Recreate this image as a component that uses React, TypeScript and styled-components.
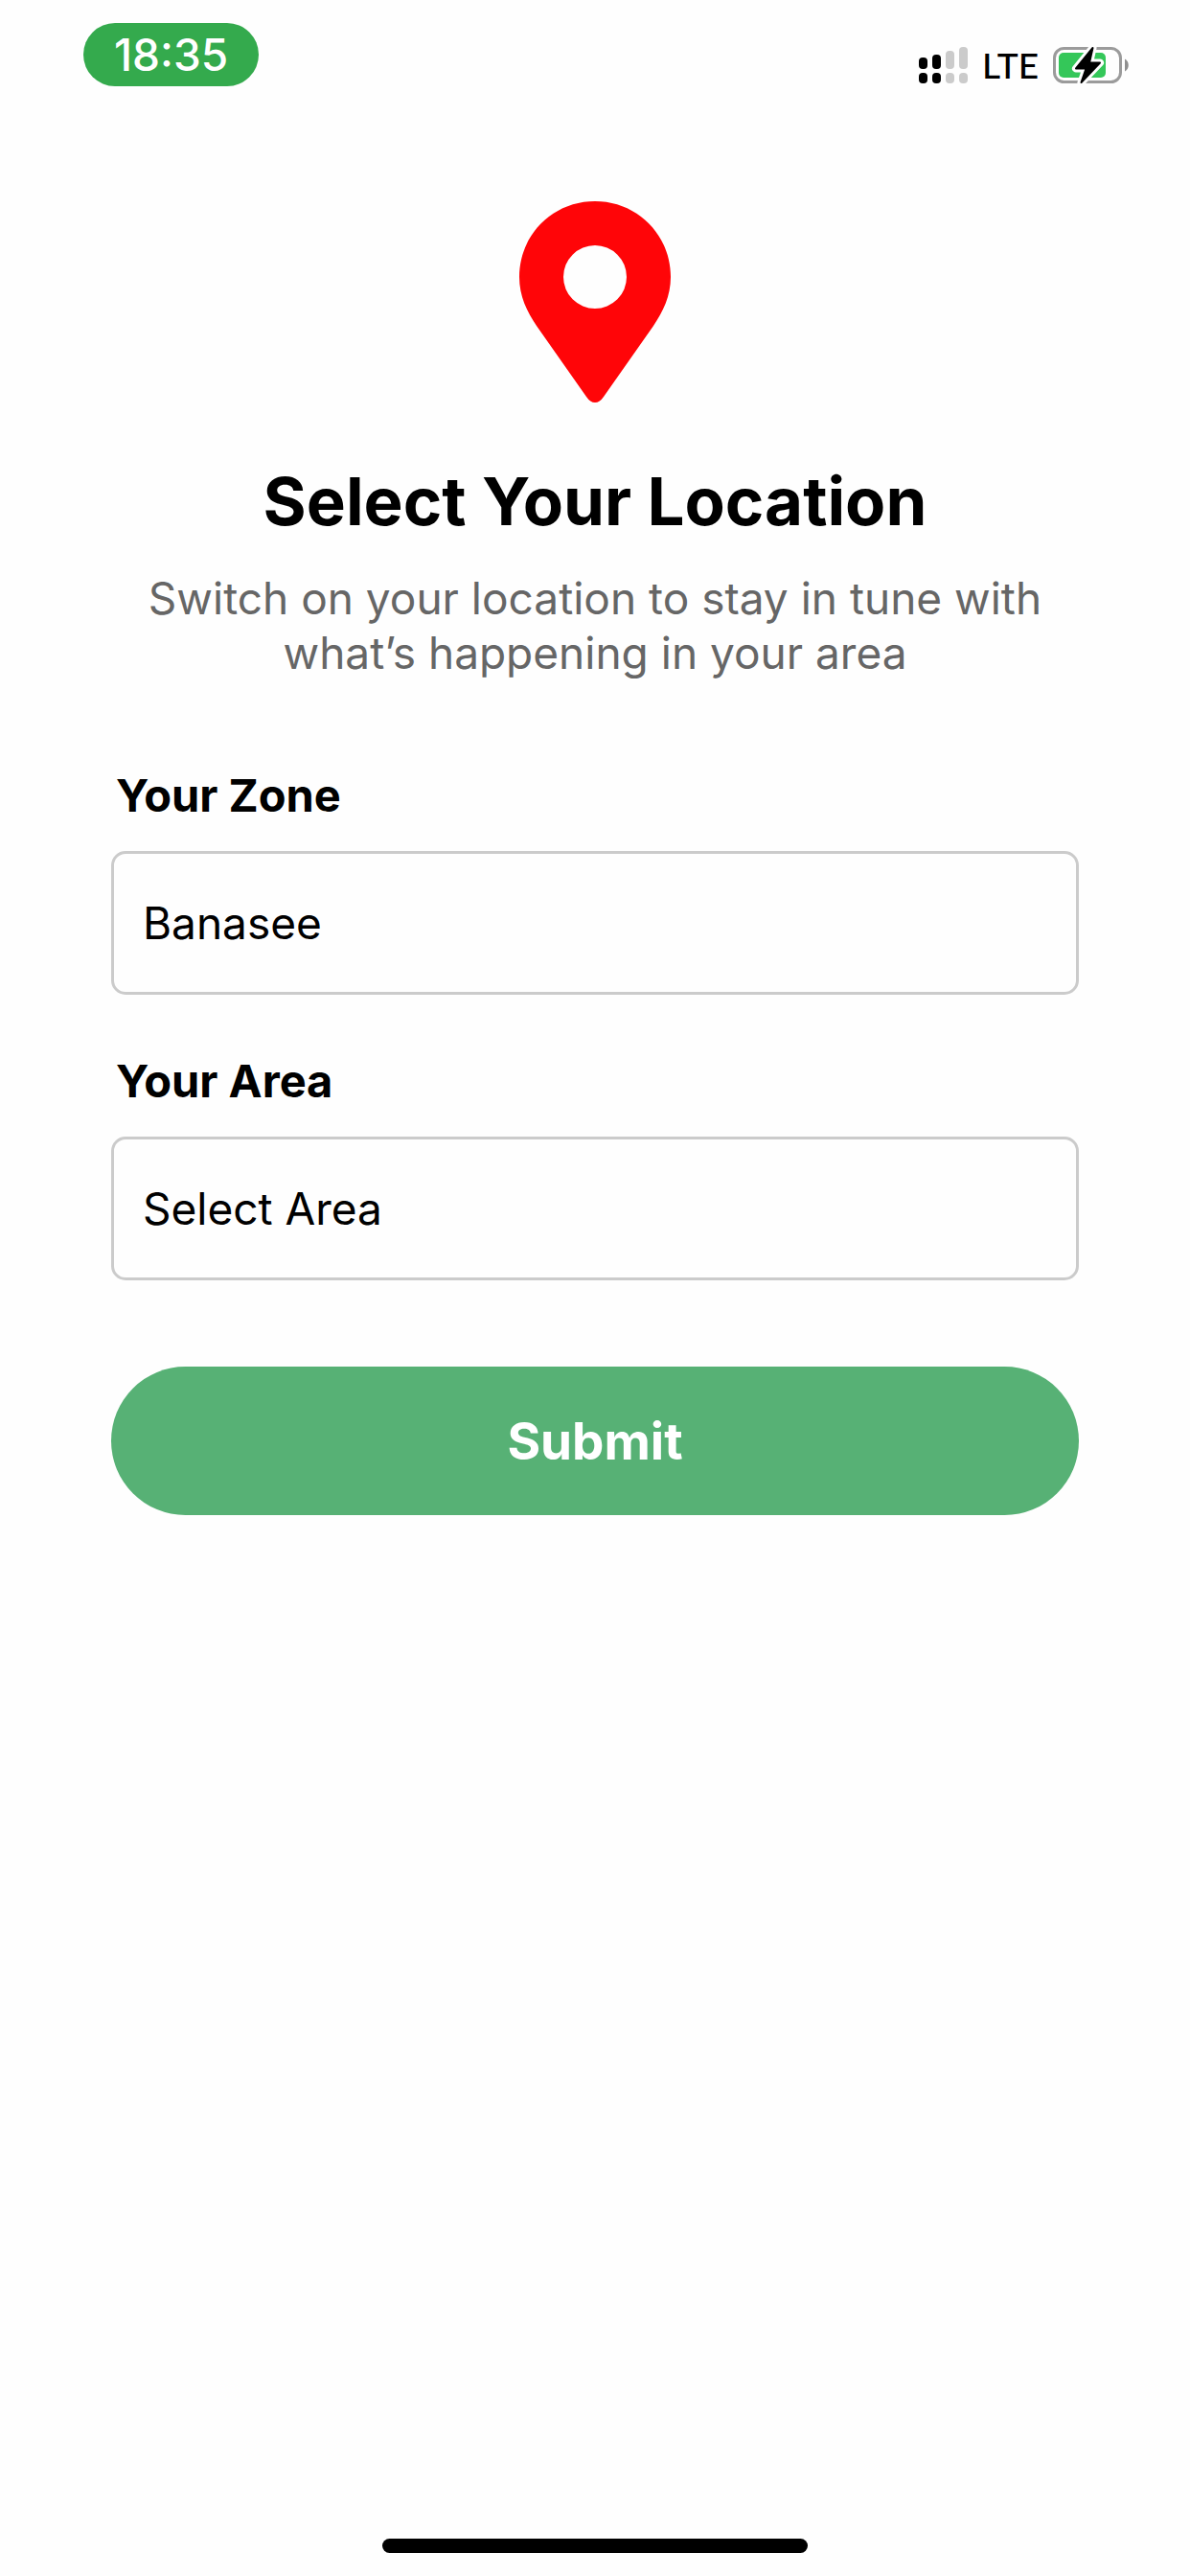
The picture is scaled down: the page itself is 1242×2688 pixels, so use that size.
import React, { useState } from "react";
import styled, { createGlobalStyle } from "styled-components";

const GlobalStyle = createGlobalStyle`
  *, *::before, *::after { box-sizing: border-box; }
  body {
    margin: 0;
    background: #fefefe;
    color: #000;
    font-family: Inter, "Liberation Sans", sans-serif;
  }
`;

const Screen = styled.div`
  display: flex;
  flex-direction: column;
  min-height: 100vh;
`;

const StatusBar = styled.header`
  display: flex;
  align-items: flex-start;
  justify-content: space-between;
  padding: 24px 64px 0 87px;
`;

const TimePill = styled.time`
  padding: 0 32px;
  border-radius: 33px;
  background: #34aa4d;
  color: #fff;
  font-size: 46px;
  font-weight: 500;
  line-height: 66px;
`;

const StatusIcons = styled.div`
  display: flex;
  align-items: center;
  gap: 15px;
  padding-top: 24px;
`;

const Carrier = styled.span`
  font-family: Lato, Inter, sans-serif;
  font-size: 37px;
  font-weight: 500;
  line-height: 40px;
`;

const Main = styled.main`
  display: flex;
  flex-direction: column;
  align-items: center;
  padding: 120px 116px 0;
`;

const Title = styled.h1`
  margin: 61px 0 31px;
  font-size: 69px;
  font-weight: 700;
  line-height: 84px;
  text-align: center;
`;

const Subtitle = styled.p`
  margin: 0;
  color: #666;
  font-size: 46px;
  line-height: 57px;
  text-align: center;
`;

const Form = styled.form`
  display: flex;
  flex-direction: column;
  gap: 61px;
  width: 100%;
  margin-top: 91px;
`;

const Field = styled.div`
  display: flex;
  flex-direction: column;
  gap: 30px;
`;

const Label = styled.label`
  padding-left: 5px;
  font-size: 47px;
  font-weight: 700;
  line-height: 57px;
`;

const Select = styled.select`
  appearance: none;
  width: 100%;
  height: 150px;
  padding: 0 30px;
  border: 3px solid #cbcbcb;
  border-radius: 15px;
  background: transparent;
  color: #000;
  font-family: inherit;
  font-size: 46px;
`;

const SubmitButton = styled.button`
  height: 155px;
  margin-top: 29px;
  border: 0;
  border-radius: 78px;
  background: #57b175;
  color: #fff;
  font-family: inherit;
  font-size: 53px;
  font-weight: 700;
`;

const HomeIndicator = styled.div`
  width: 444px;
  max-width: 60%;
  height: 15px;
  margin: auto auto 24px;
  border-radius: 8px;
  background: #000;
`;

const SignalIcon = () => (
  <svg width="51" height="38" viewBox="0 0 51 38" aria-hidden="true">
    <g fill="#000">
      <rect x="0" y="11" width="9" height="12" rx="4" />
      <rect x="14" y="8" width="9" height="15" rx="4" />
      <rect x="0" y="27" width="9" height="11" rx="4" />
      <rect x="14" y="27" width="9" height="11" rx="4" />
    </g>
    <g fill="#cbcbcb">
      <rect x="28" y="4" width="9" height="19" rx="4" />
      <rect x="42" y="0" width="9" height="23" rx="4" />
      <rect x="28" y="27" width="9" height="11" rx="4" />
      <rect x="42" y="27" width="9" height="11" rx="4" />
    </g>
  </svg>
);

const BOLT = "M41.5 2 L24 23.5 H34.5 L29.5 38 L49 17.500 H38 Z";

const BatteryIcon = () => (
  <svg width="79" height="40" viewBox="0 0 79 40" aria-hidden="true">
    <rect x="1.5" y="2.5" width="69" height="35" rx="10" fill="none" stroke="#9b9b9b" strokeWidth="3" />
    <rect x="6" y="7" width="49" height="26" rx="5" fill="#34c759" />
    <path d="M75 13.500 C80 16 80 24 75 26.500 Z" fill="#8f8f8f" />
    <path d={BOLT} fill="#fefefe" stroke="#fefefe" strokeWidth="8" strokeLinejoin="round" />
    <path d={BOLT} fill="#000" stroke="#000" strokeWidth="2" strokeLinejoin="round" />
  </svg>
);

const PinIcon = () => (
  <svg width="158" height="210" viewBox="0 0 158 210" aria-hidden="true">
    <path
      fill="#ff0508"
      fillRule="evenodd"
      d="M79 0 C35 0 0 35 0 79 C0 99 8 115 18 130 L70 204 Q74 210 79 210 Q84 210 88 204 L140 130 C150 115 158 99 158 79 C158 35 123 0 79 0 Z M79 46 A33 33 0 1 1 79 112 A33 33 0 1 1 79 46 Z"
    />
  </svg>
);

export default function App() {
  const [zone, setZone] = useState("Banasee");
  const [area, setArea] = useState("Select Area");

  return (
    <>
      <GlobalStyle />
      <Screen>
        <StatusBar>
          <TimePill>18:35</TimePill>
          <StatusIcons>
            <SignalIcon />
            <Carrier>LTE</Carrier>
            <BatteryIcon />
          </StatusIcons>
        </StatusBar>
        <Main>
          <PinIcon />
          <Title>Select Your Location</Title>
          <Subtitle>Switch on your location to stay in tune with what’s happening in your area</Subtitle>
          <Form onSubmit={(event) => event.preventDefault()}>
            <Field>
              <Label htmlFor="zone">Your Zone</Label>
              <Select id="zone" value={zone} onChange={(event) => setZone(event.target.value)}>
                <option>Banasee</option>
              </Select>
            </Field>
            <Field>
              <Label htmlFor="area">Your Area</Label>
              <Select id="area" value={area} onChange={(event) => setArea(event.target.value)}>
                <option>Select Area</option>
              </Select>
            </Field>
            <SubmitButton type="submit">Submit</SubmitButton>
          </Form>
        </Main>
        <HomeIndicator />
      </Screen>
    </>
  );
}
